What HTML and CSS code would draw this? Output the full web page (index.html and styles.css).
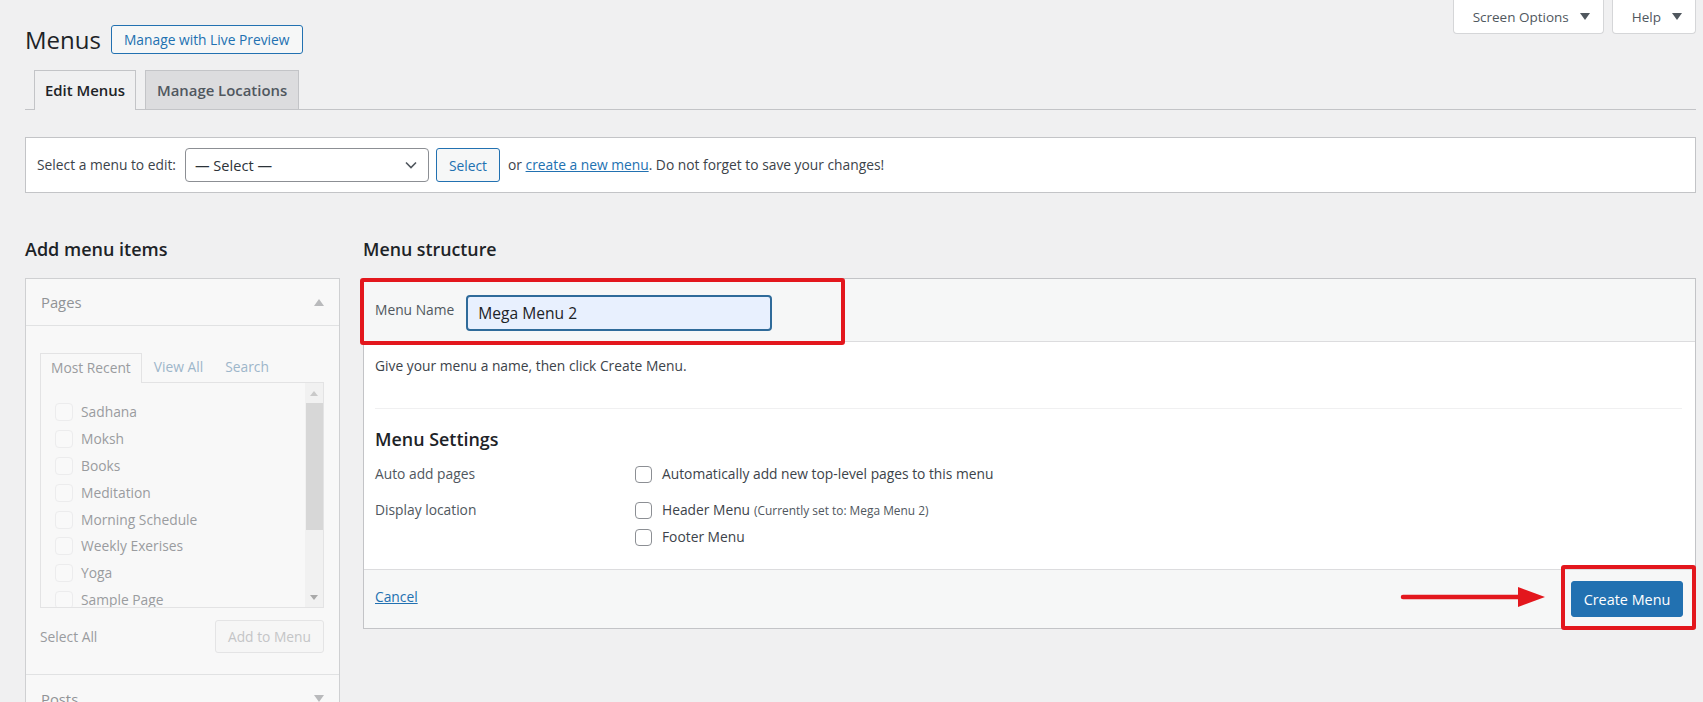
FILE: index.html
```html
<!DOCTYPE html>
<html lang="en">
<head>
<meta charset="utf-8">
<title>Menus</title>
<link rel="stylesheet" href="styles.css">
</head>
<body>
<div class="wrap">
  <div class="screen-meta-links">
    <button class="meta-tab" type="button">Screen Options <span class="caret-down"></span></button>
    <button class="meta-tab" type="button">Help <span class="caret-down"></span></button>
  </div>

  <div class="title-row">
    <h1 class="page-title">Menus</h1>
    <a class="title-action" href="#">Manage with Live Preview</a>
  </div>

  <nav class="nav-tabs">
    <a class="nav-tab is-active" href="#">Edit Menus</a>
    <a class="nav-tab" href="#">Manage Locations</a>
  </nav>

  <div class="manage-menus">
    <span class="manage-label">Select a menu to edit:</span>
    <div class="fake-select">
      <span>— Select —</span>
      <svg class="chevron" width="12" height="8" viewBox="0 0 12 8"><path d="M1 1.5l5 5 5-5" fill="none" stroke="#50575e" stroke-width="1.6"/></svg>
    </div>
    <button class="btn-secondary" type="button">Select</button>
    <span class="manage-hint">or <a href="#">create a new menu</a>. Do not forget to save your changes!</span>
  </div>

  <div class="columns">
    <div class="col-left">
      <h2 class="col-heading">Add menu items</h2>
      <div class="accordion">
        <div class="acc-title">
          <span>Pages</span>
          <span class="tri-up"></span>
        </div>
        <div class="acc-body">
          <div class="inner-tabs">
            <span class="inner-tab is-active">Most Recent</span>
            <span class="inner-tab">View All</span>
            <span class="inner-tab">Search</span>
          </div>
          <div class="list-box">
            <ul class="page-list">
              <li><span class="box"></span>Sadhana</li>
              <li><span class="box"></span>Moksh</li>
              <li><span class="box"></span>Books</li>
              <li><span class="box"></span>Meditation</li>
              <li><span class="box"></span>Morning Schedule</li>
              <li><span class="box"></span>Weekly Exerises</li>
              <li><span class="box"></span>Yoga</li>
              <li><span class="box"></span>Sample Page</li>
            </ul>
            <div class="scrollbar">
              <span class="sb-arrow"><span class="sb-up"></span></span>
              <span class="sb-thumb"></span>
              <span class="sb-space"></span>
              <span class="sb-arrow"><span class="sb-down"></span></span>
            </div>
          </div>
          <div class="acc-actions">
            <span>Select All</span>
            <span class="btn-faded">Add to Menu</span>
          </div>
        </div>
        <div class="acc-title acc-title-next">
          <span>Posts</span>
          <span class="tri-down"></span>
        </div>
      </div>
    </div>

    <div class="col-right">
      <h2 class="col-heading">Menu structure</h2>
      <div class="menu-edit">
        <div class="menu-header">
          <label class="menu-name-label" for="menu-name">Menu Name</label>
          <input class="menu-name-input" id="menu-name" type="text" value="Mega Menu 2">
        </div>
        <div class="menu-body">
          <p class="menu-intro">Give your menu a name, then click Create Menu.</p>
          <div class="menu-settings">
            <h3 class="settings-heading">Menu Settings</h3>
            <div class="settings-grid">
              <span class="setting-label">Auto add pages</span>
              <div class="setting-options">
                <label class="opt"><input type="checkbox">Automatically add new top-level pages to this menu</label>
              </div>
              <span class="setting-label">Display location</span>
              <div class="setting-options">
                <label class="opt"><input type="checkbox">Header Menu <span class="opt-note">(Currently set to: Mega Menu 2)</span></label>
                <label class="opt"><input type="checkbox">Footer Menu</label>
              </div>
            </div>
          </div>
        </div>
        <div class="menu-footer">
          <a class="cancel-link" href="#">Cancel</a>
          <button class="btn-primary" type="button">Create Menu</button>
        </div>

        <span class="callout callout-name"></span>
        <span class="callout callout-create"></span>
        <svg class="callout-arrow" width="146" height="22" viewBox="0 0 146 22">
          <line x1="3" y1="11" x2="122" y2="11" stroke="#e3171d" stroke-width="4.5" stroke-linecap="round"/>
          <polygon points="118,1 145,11 118,21" fill="#e3171d"/>
        </svg>
      </div>
    </div>
  </div>
</div>
</body>
</html>
```

FILE: styles.css
```css
* { box-sizing: border-box; }

html, body { margin: 0; }

body {
  background: #f0f0f1;
  color: #3c434a;
  font-family: "Open Sans", "Noto Sans", sans-serif;
  font-size: 13.8px;
  line-height: 20px;
  height: 702px;
  overflow: hidden;
}

a { color: #2271b1; }

button { font-family: inherit; }

.wrap { padding: 0 7px 0 25px; }

/* top-right tabs */
.screen-meta-links {
  float: right;
  display: flex;
  gap: 8px;
}
.meta-tab {
  height: 34px;
  display: flex;
  align-items: center;
  gap: 11px;
  padding: 0 13px 0 19px;
  background: #fff;
  border: 1px solid #d5d6d8;
  border-top: none;
  border-radius: 0 0 4px 4px;
  color: #50575e;
  font-size: 13.5px;
}
.caret-down {
  width: 0; height: 0;
  border-left: 5px solid transparent;
  border-right: 5px solid transparent;
  border-top: 7px solid #50575e;
}

/* title */
.title-row {
  display: flex;
  align-items: center;
  padding-top: 25px;
}
.page-title {
  margin: 0 10px 0 0;
  font-size: 24px;
  font-weight: 400;
  line-height: 29px;
  color: #1d2327;
}
.title-action {
  height: 29px;
  padding: 0 12px;
  border: 1px solid #2271b1;
  border-radius: 3px;
  background: #f6f7f7;
  line-height: 27px;
  text-decoration: none;
  font-size: 13.8px;
}

/* page tabs */
.nav-tabs {
  display: flex;
  align-items: flex-start;
  margin-top: 16px;
  padding-left: 9px;
  border-bottom: 1px solid #c3c4c7;
}
.nav-tab {
  height: 39px;
  margin-right: 9px;
  padding: 0 11px;
  border: 1px solid #c3c4c7;
  border-bottom: none;
  background: #dcdcde;
  color: #50575e;
  font-size: 14.9px;
  font-weight: 600;
  line-height: 38px;
  text-decoration: none;
}
.nav-tab.is-active {
  height: 40px;
  margin-bottom: -1px;
  padding: 0 10px;
  background: #f0f0f1;
  color: #1d2327;
}

/* menu picker */
.manage-menus {
  display: flex;
  align-items: center;
  height: 56px;
  margin-top: 27px;
  padding: 0 11px;
  background: #fff;
  border: 1px solid #c3c4c7;
}
.fake-select {
  display: flex;
  align-items: center;
  justify-content: space-between;
  width: 244px;
  height: 34px;
  margin-left: 9px;
  padding: 0 11px 0 9px;
  border: 1px solid #8c8f94;
  border-radius: 4px;
  color: #2c3338;
  font-size: 14.6px;
}
.btn-secondary {
  height: 34px;
  margin-left: 7px;
  padding: 0 12px;
  border: 1px solid #2271b1;
  border-radius: 3px;
  background: #f6f7f7;
  color: #2271b1;
  font-size: 13.8px;
}
.manage-hint { margin-left: 8px; }

/* two columns */
.columns {
  display: flex;
  gap: 23px;
  margin-top: 44px;
}
.col-left { width: 315px; flex: none; }
.col-right { flex: 1; min-width: 0; }
.col-heading {
  margin: 0 0 17px;
  font-size: 18px;
  font-weight: 600;
  line-height: 24px;
  color: #1d2327;
}
.col-right .col-heading { font-size: 17.8px; }

/* faded accordion */
.accordion {
  border: 1px solid #cfd0d2;
  background: #f8f8f8;
}
.acc-title {
  display: flex;
  align-items: center;
  justify-content: space-between;
  height: 47px;
  padding: 0 15px;
  border-bottom: 1px solid #e1e2e3;
  color: #909396;
  font-size: 14.8px;
}
.acc-title-next { border-bottom: none; }
.tri-up, .tri-down {
  width: 0; height: 0;
  border-left: 5px solid transparent;
  border-right: 5px solid transparent;
}
.tri-up { border-bottom: 7px solid #b9babc; }
.tri-down { border-top: 7px solid #b9babc; }

.acc-body {
  padding: 27px 15px 21px 14px;
  border-bottom: 1px solid #e1e2e3;
}
.inner-tabs {
  display: flex;
  height: 29px;
}
.inner-tab {
  padding: 0 10px;
  line-height: 28px;
  color: #9db6ca;
  margin-right: 2px;
}
.inner-tab.is-active {
  height: 30px;
  margin-bottom: -1px;
  position: relative;
  border: 1px solid #e3e3e4;
  border-bottom: none;
  background: #f8f8f8;
  color: #9a9c9f;
}
.list-box {
  display: flex;
  height: 226px;
  border: 1px solid #e3e3e4;
  background: #f8f8f8;
}
.page-list {
  flex: 1;
  margin: 0;
  padding: 16px 0 0 14px;
  list-style: none;
  overflow: hidden;
}
.page-list li {
  display: flex;
  align-items: center;
  height: 26.8px;
  color: #9a9c9f;
  white-space: nowrap;
}
.box {
  width: 18px;
  height: 18px;
  margin-right: 8px;
  border: 1px solid #ececed;
  border-radius: 4px;
  background: #f9f9f9;
}
.scrollbar {
  display: flex;
  flex-direction: column;
  align-items: center;
  width: 18px;
  background: #f1f1f1;
}
.sb-arrow {
  display: flex;
  align-items: center;
  justify-content: center;
  height: 20px;
  width: 18px;
}
.sb-up, .sb-down {
  width: 0; height: 0;
  border-left: 4px solid transparent;
  border-right: 4px solid transparent;
}
.sb-up { border-bottom: 5px solid #c9c9c9; }
.sb-down { border-top: 5px solid #a9a9a9; }
.sb-thumb {
  width: 17px;
  height: 127px;
  background: #d7d7d7;
}
.sb-space { flex: 1; }

.acc-actions {
  display: flex;
  align-items: center;
  justify-content: space-between;
  margin-top: 12px;
  color: #9a9c9f;
}
.btn-faded {
  width: 109px;
  height: 33px;
  line-height: 31px;
  text-align: center;
  border: 1px solid #e4e4e5;
  border-radius: 3px;
  background: #f6f6f6;
  color: #c4c5c7;
}

/* menu editor panel */
.menu-edit {
  position: relative;
  border: 1px solid #c3c4c7;
  background: #fff;
}
.menu-header {
  display: flex;
  align-items: flex-start;
  padding: 16px 11px 10px;
  background: #f6f7f7;
  border-bottom: 1px solid #dcdcde;
}
.menu-name-label {
  margin-top: 5px;
  color: #50575e;
}
.menu-name-input {
  width: 306px;
  height: 36px;
  margin: 0 0 0 12px;
  padding: 0 10px;
  border: 2px solid #2f6b9a;
  border-radius: 4px;
  background: #e8f0fe;
  color: #1d2327;
  font-family: inherit;
  font-size: 15.6px;
  outline: none;
}
.menu-body {
  padding: 14px 13px 22px 11px;
}
.menu-intro { margin: 0; }
.menu-settings {
  margin-top: 32px;
  border-top: 1px solid #f0f0f1;
}
.settings-heading {
  margin: 18px 0 0;
  font-size: 17.9px;
  font-weight: 600;
  line-height: 24px;
  color: #1d2327;
}
.settings-grid {
  display: grid;
  grid-template-columns: 260px 1fr;
  row-gap: 16px;
  margin-top: 13px;
}
.setting-label { color: #50575e; }
.setting-options {
  display: flex;
  flex-direction: column;
  gap: 7px;
}
.opt {
  display: flex;
  align-items: center;
  color: #3c434a;
}
.opt input {
  appearance: none;
  -webkit-appearance: none;
  width: 17px;
  height: 17px;
  margin: 0 10px 0 0;
  border: 1px solid #8c8f94;
  border-radius: 4px;
  background: #fff;
}
.opt-note {
  margin-left: 4px;
  font-size: 11.9px;
  color: #50575e;
}
.menu-footer {
  display: flex;
  align-items: center;
  justify-content: space-between;
  padding: 11px 12px 11px 11px;
  border-top: 1px solid #dcdcde;
  background: #f6f7f7;
}
.cancel-link { margin-top: -4px; }
.btn-primary {
  width: 112px;
  height: 36px;
  border: 1px solid #2271b1;
  border-radius: 3px;
  background: #2271b1;
  color: #fff;
  font-size: 14.4px;
}

/* red callouts drawn over the editor */
.callout {
  position: absolute;
  border: 4px solid #e3171d;
  border-radius: 3px;
  pointer-events: none;
}
.callout-name {
  left: -4px;
  top: -1px;
  width: 485px;
  height: 67px;
}
.callout-create {
  right: -1px;
  bottom: -2px;
  width: 135px;
  height: 65px;
}
.callout-arrow {
  position: absolute;
  right: 149px;
  bottom: 20px;
}
```
